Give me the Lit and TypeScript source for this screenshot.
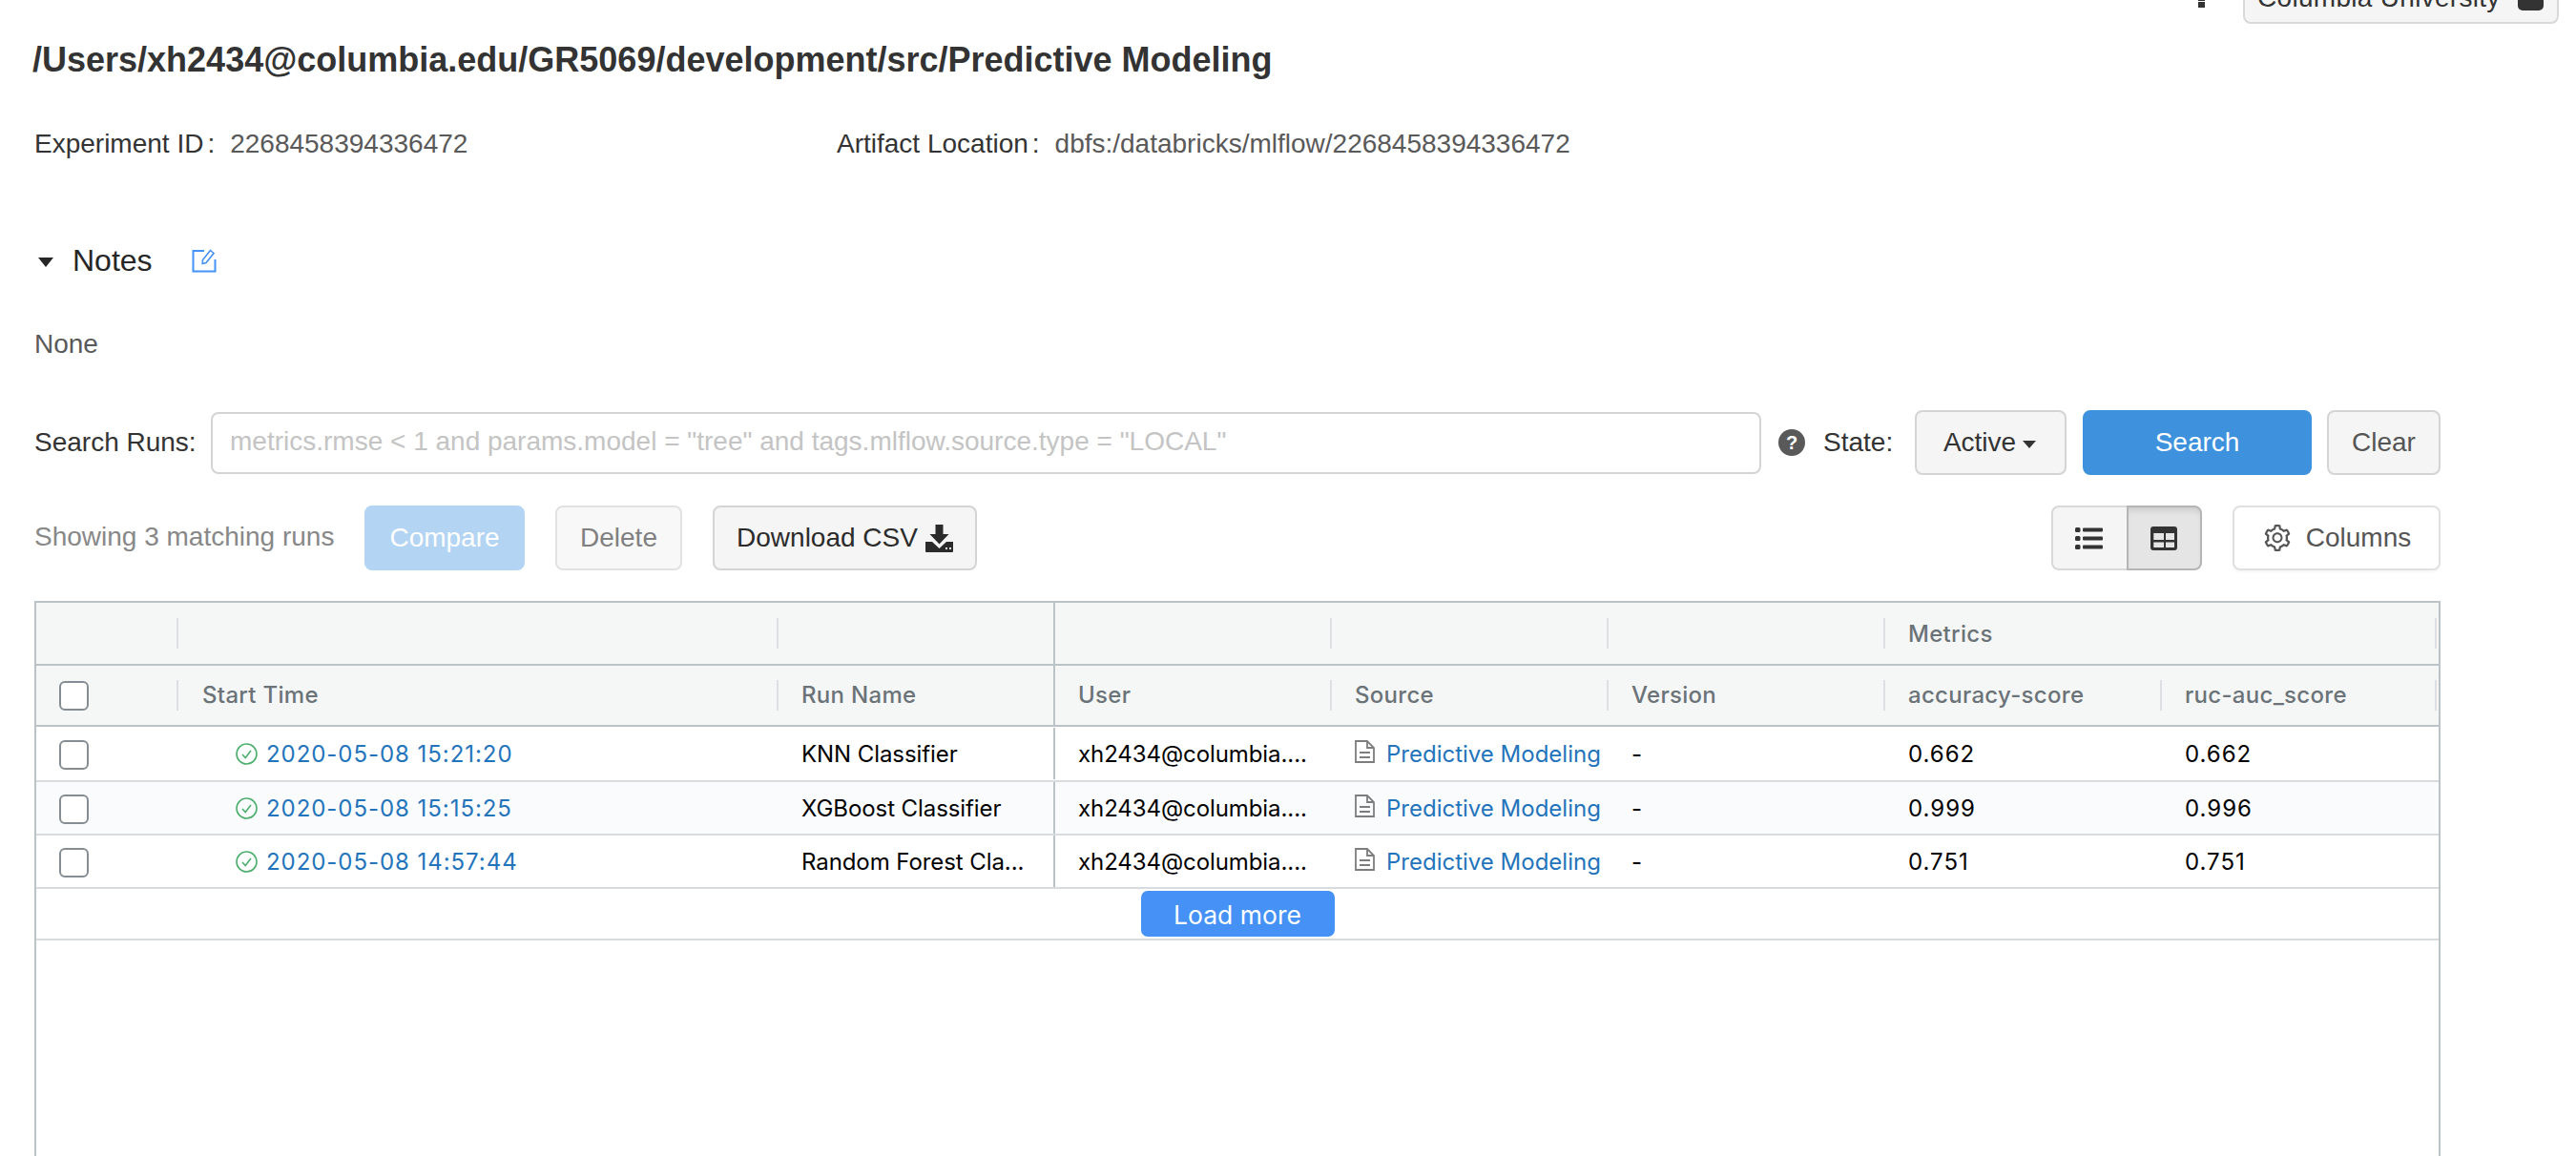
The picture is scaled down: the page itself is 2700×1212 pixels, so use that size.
import { LitElement, html, css, svg } from "lit";
import { customElement } from "lit/decorators.js";

const GEAR = "M924.8 625.7l-65.5-56c3.1-19 4.7-38.4 4.7-57.8s-1.6-38.8-4.7-57.8l65.5-56a32.03 32.03 0 0 0 9.3-35.2l-.9-2.6a443.74 443.74 0 0 0-79.7-137.9l-1.8-2.1a32.12 32.12 0 0 0-35.1-9.5l-81.3 28.9c-30-24.6-63.5-44-99.7-57.6l-15.7-85a32.05 32.05 0 0 0-25.8-25.7l-2.7-.5c-52.1-9.4-106.9-9.4-159 0l-2.7.5a32.05 32.05 0 0 0-25.8 25.7l-15.8 85.4a351.86 351.86 0 0 0-99 57.4l-81.9-29.1a32 32 0 0 0-35.1 9.5l-1.8 2.1a446.02 446.02 0 0 0-79.7 137.9l-.9 2.6c-4.5 12.5-.8 26.5 9.3 35.2l66.3 56.6c-3.1 18.8-4.6 38-4.6 57.1 0 19.2 1.5 38.4 4.6 57.1L99 625.5a32.03 32.03 0 0 0-9.3 35.2l.9 2.6c18.1 50.4 44.9 96.9 79.7 137.9l1.8 2.1a32.12 32.12 0 0 0 35.1 9.5l81.9-29.1c29.8 24.5 63.1 43.9 99 57.4l15.8 85.4a32.05 32.05 0 0 0 25.8 25.7l2.7.5a449.4 449.4 0 0 0 159 0l2.7-.5a32.05 32.05 0 0 0 25.8-25.7l15.7-85a350 350 0 0 0 99.7-57.6l81.3 28.9a32 32 0 0 0 35.1-9.5l1.8-2.1c34.8-41.1 61.6-87.5 79.7-137.9l.9-2.6c4.5-12.3.8-26.3-9.3-35zM788.3 465.9c2.5 15.1 3.8 30.6 3.8 46.1s-1.3 31-3.8 46.1l-6.6 40.1 74.7 63.9a370.03 370.03 0 0 1-42.6 73.6L721 702.8l-31.4 25.8c-23.9 19.6-50.5 35-79.3 45.8l-38.1 14.3-17.9 97a377.5 377.5 0 0 1-85 0l-17.9-97.2-37.8-14.5c-28.5-10.8-55-26.2-78.7-45.7l-31.4-25.9-93.4 33.2c-17-22.9-31.2-47.6-42.6-73.6l75.5-64.5-6.5-40c-2.4-14.9-3.7-30.3-3.7-45.5 0-15.3 1.2-30.6 3.7-45.5l6.5-40-75.5-64.5c11.3-26.1 25.6-50.7 42.6-73.6l93.4 33.2 31.4-25.9c23.7-19.5 50.2-34.9 78.7-45.7l37.9-14.3 17.9-97.2c28.1-3.2 56.8-3.2 85 0l17.9 97 38.1 14.3c28.7 10.8 55.4 26.2 79.3 45.8l31.4 25.8 92.8-32.9c17 22.9 31.2 47.6 42.6 73.6L781.8 426l6.5 39.9zM512 326c-97.2 0-176 78.8-176 176s78.8 176 176 176 176-78.8 176-176-78.8-176-176-176zm79.2 255.2A111.6 111.6 0 0 1 512 614c-29.9 0-58-11.7-79.2-32.8A111.6 111.6 0 0 1 400 502c0-29.9 11.7-58 32.8-79.2C454 401.6 482.1 390 512 390c29.9 0 58 11.6 79.2 32.8A111.6 111.6 0 0 1 624 502c0 29.9-11.7 58-32.8 79.2z";

const runs = [
  { time: "2020-05-08 15:21:20", name: "KNN Classifier", acc: "0.662", auc: "0.662" },
  { time: "2020-05-08 15:15:25", name: "XGBoost Classifier", acc: "0.999", auc: "0.996" },
  { time: "2020-05-08 14:57:44", name: "Random Forest Cla...", acc: "0.751", auc: "0.751" },
];

@customElement("app-root")
export class AppRoot extends LitElement {
  static styles = css`
    :host { display: block; height: 1212px; overflow: hidden; background: #fff; font-family: "Liberation Sans", Arial, sans-serif; font-size: 28px; color: #333; }
    .page { padding: 0 142px 0 36px; box-sizing: border-box; width: 2700px; }
    .topbar { display: flex; justify-content: flex-end; align-items: flex-end; height: 25px; margin-right: -124px; }
    .kebab { width: 7px; height: 8px; background: linear-gradient(#333 0 1px, #fff 1px 2px, #333 2px); margin-right: 40px; align-self: flex-start; }
    .org { height: 65px; flex: none; width: 331px; box-sizing: border-box; border: 2px solid #d9d9d9; border-radius: 8px; background: #f5f5f5; display: flex; align-items: flex-end; justify-content: space-between; padding: 0 14px 9px 13px; color: #333; line-height: 32px; margin-top: -40px; letter-spacing: .3px; }
    .org i { display: block; width: 27px; height: 22px; background: #333; border-radius: 5px; margin-bottom: 3px; }
    h1 { margin: 13px 0 0 -2px; font-size: 36px; line-height: 50px; font-weight: 700; color: #333; white-space: nowrap; }
    .meta { display: flex; margin-top: 43px; line-height: 40px; }
    .meta > div { display: flex; }
    .meta > div:first-child { width: 841px; }
    .meta b { font-weight: 400; margin-left: 4px; }
    .meta span { color: #595959; margin-left: 16px; }
    .notes { display: flex; align-items: center; margin-top: 82px; line-height: 40px; font-size: 32px; color: #262626; }
    .caret { width: 0; height: 0; border: 8.5px solid transparent; border-top: 10px solid #262626; border-bottom: 0; margin: 4px 20px 0 4px; }
    .edit { margin-left: 41px; display: block; }
    .none { margin-top: 48px; line-height: 40px; color: #595959; }
    .search { display: flex; align-items: center; height: 68px; margin-top: 49px; }
    .search label { width: 185px; flex: none; }
    .input { flex: 1; height: 65px; box-sizing: border-box; border: 2px solid #d4d4d4; border-radius: 8px; color: #c4c4c4; padding: 0 18px 2px; display: flex; align-items: center; white-space: nowrap; }
    .help { flex: none; width: 28px; height: 28px; border-radius: 50%; background: #595959; color: #fff; font-size: 20px; font-weight: 700; display: flex; align-items: center; justify-content: center; margin: 0 19px 0 18px; }
    .state { width: 96px; flex: none; }
    .btn { box-sizing: border-box; height: 68px; flex: none; border: 2px solid #d4d4d4; border-radius: 8px; background: #f5f5f5; color: #333; display: flex; align-items: center; justify-content: center; }
    .active { width: 159px; gap: 7px; padding-right: 2px; }
    .active i { display: block; border: 7.5px solid transparent; border-top: 8px solid #333; border-bottom: 0; margin-top: 3px; }
    .primary { width: 240px; margin-left: 17px; background: #3e91dc; border-color: #3e91dc; color: #fff; }
    .clear { width: 119px; margin-left: 16px; color: #555; }
    .toolbar { display: flex; align-items: center; height: 68px; margin-top: 32px; }
    .count { width: 346px; color: #888; flex: none; margin-top: -2px; }
    .compare { width: 168px; background: #b3d4f2; border-color: #b3d4f2; color: #fff; }
    .delete { width: 133px; margin-left: 32px; background: #f8f8f8; border-color: #e2e2e2; color: #808080; }
    .download { width: 277px; margin-left: 32px; gap: 8px; color: #2b2b2b; }
    .spacer { flex: 1; }
    .toggle { display: flex; width: 158px; height: 68px; box-sizing: border-box; }
    .toggle div { box-sizing: border-box; display: flex; align-items: center; justify-content: center; height: 68px; }
    .t1 { width: 79px; border: 2px solid #d9d9d9; border-right: 0; border-radius: 8px 0 0 8px; background: #f5f5f5; padding-right: 3px; }
    .t2 { width: 79px; border: 2px solid #b5b5b5; border-radius: 0 8px 8px 0; background: #e5e5e5; box-shadow: inset 0 6px 6px -3px rgba(0,0,0,.12); padding-right: 2px; }
    .columns { width: 218px; margin-left: 32px; background: #fff; border-color: #e0e0e0; color: #555; gap: 14px; box-shadow: 0 2px 3px rgba(0,0,0,.04); }
    .table { margin: 32px 0 0; height: 700px; box-sizing: border-box; border: 2px solid #bcc3c7; font-family: Inter, "Liberation Sans", sans-serif; font-size: 24px; color: #000; }
    .row { display: grid; grid-template-columns: 149px 629px 290px 290px 290px 290px 290px 288px; align-items: center; box-sizing: border-box; }
    .h1 { height: 66px; background: #f5f7f7; border-bottom: 2px solid #bcc3c7; }
    .h2 { height: 64px; background: #f5f7f7; border-bottom: 2px solid #bcc3c7; }
    .head { height: 32px; line-height: 32px; padding-left: 24px; box-sizing: border-box; border-right: 2px solid #dde0e2; color: #6b7378; font-weight: 500; font-size: 24px; letter-spacing: .3px; white-space: nowrap; }
    .h1 .head { padding-top: 1px; }
    .head.wide { grid-column: span 2; }
    .head.start { padding-left: 25px; }
    .head.lock, .cell.lock { border-right: 2px solid #bcc3c7; }
    .head.lock { height: 100%; margin: 0; display: flex; align-items: center; }
    .cell { padding-left: 24px; box-sizing: border-box; height: 54px; display: flex; align-items: center; white-space: nowrap; overflow: hidden; letter-spacing: -.08px; }
    .box { width: 31px; height: 31px; box-sizing: border-box; border: 2px solid #858d92; border-radius: 6px; background: #fff; flex: none; }
    .head.chk { padding-left: 24px; overflow: visible; display: flex; align-items: center; }
    .cell.chk { padding-left: 24px; }
    .cell.chk .box { margin-top: 3px; }
    .r { border-bottom: 2px solid #d9dcdf; height: 56px; }
    .r.first { height: 58px; }
    .r.alt { background: #fafbfd; }
    .cell.time { padding-left: 60px; gap: 9px; color: #2374bb; letter-spacing: .95px; }
    .cell.num { letter-spacing: 1px; }
    .cell.src { gap: 12px; color: #2374bb; letter-spacing: 0; }
    .src svg { margin-top: -5px; }
    .more { height: 54px; border-bottom: 2px solid #d9dcdf; display: flex; justify-content: center; box-sizing: border-box; padding: 2px 0 0; }
    .more div { width: 203px; height: 48px; padding-top: 1px; box-sizing: border-box; background: #4591f5; border-radius: 7px; color: #fff; display: flex; align-items: center; justify-content: center; font-size: 26.5px; }
    svg { display: block; flex: none; }
  `;

  render() {
    return html`<div class="page">
      <div class="topbar"><div class="kebab"></div><div class="org">Columbia University<i></i></div></div>
      <h1>/Users/xh2434@columbia.edu/GR5069/development/src/Predictive Modeling</h1>
      <div class="meta">
        <div>Experiment ID<b>:</b><span>2268458394336472</span></div>
        <div>Artifact Location<b>:</b><span>dbfs:/databricks/mlflow/2268458394336472</span></div>
      </div>
      <div class="notes"><i class="caret"></i>Notes
        <svg class="edit" width="26" height="25" viewBox="0 0 26 25" fill="none" stroke="#4591f5" stroke-width="2"><path d="M13 2H1.5v21.5h23V11"/><path d="M19.5 1.5l3.5 3-8 10-3.800 1 .3-4z" stroke-width="1.600"/></svg>
      </div>
      <div class="none">None</div>
      <div class="search">
        <label>Search Runs:</label>
        <div class="input">metrics.rmse &lt; 1 and params.model = "tree" and tags.mlflow.source.type = "LOCAL"</div>
        <div class="help">?</div>
        <div class="state">State:</div>
        <div class="btn active">Active<i></i></div>
        <div class="btn primary">Search</div>
        <div class="btn clear">Clear</div>
      </div>
      <div class="toolbar">
        <div class="count">Showing 3 matching runs</div>
        <div class="btn compare">Compare</div>
        <div class="btn delete">Delete</div>
        <div class="btn download">Download CSV
          <svg width="29" height="29" viewBox="0 0 29 29" fill="#2b2b2b"><path d="M10.5 0h8v10h6L14.5 20.5 4.500 10h6z"/><path d="M0 18h7l7.500 7 7.500-7h7v10a1 1 0 0 1-1 1H1a1 1 0 0 1-1-1z"/><path d="M21 24h2v2h-2zM25 24h2v2h-2z" fill="#f5f5f5"/></svg>
        </div>
        <div class="spacer"></div>
        <div class="toggle">
          <div class="t1"><svg width="29" height="23" viewBox="0 0 29 23" fill="#333"><rect x="0" y="0" width="5.500" height="5" rx="1.500"/><rect x="0" y="9" width="5.500" height="5" rx="1.500"/><rect x="0" y="18" width="5.500" height="5" rx="1.500"/><rect x="8" y=".5" width="21" height="4" rx="1"/><rect x="8" y="9.500" width="21" height="4" rx="1"/><rect x="8" y="18.500" width="21" height="4" rx="1"/></svg></div>
          <div class="t2"><svg width="28" height="25" viewBox="0 0 28 25"><rect width="28" height="25" rx="3" fill="#333"/><rect x="3.300" y="7" width="10.700" height="7" fill="#e5e5e5"/><rect x="16" y="7" width="9" height="7" fill="#e5e5e5"/><rect x="3.300" y="16.500" width="10.700" height="5.500" fill="#e5e5e5"/><rect x="16" y="16.500" width="9" height="5.500" fill="#e5e5e5"/></svg></div>
        </div>
        <div class="btn columns"><svg width="32" height="32" viewBox="0 0 1024 1024" fill="#555">${svg`<path d="${GEAR}"/>`}</svg>Columns</div>
      </div>
      <div class="table">
        <div class="row h1">
          <div class="head"></div><div class="head"></div><div class="head lock"></div>
          <div class="head"></div><div class="head"></div><div class="head"></div>
          <div class="head wide">Metrics</div>
        </div>
        <div class="row h2">
          <div class="head chk"><div class="box"></div></div>
          <div class="head start">Start Time</div>
          <div class="head lock">Run Name</div>
          <div class="head">User</div>
          <div class="head">Source</div>
          <div class="head">Version</div>
          <div class="head">accuracy-score</div>
          <div class="head">ruc-auc_score</div>
        </div>
        ${runs.map((r, i) => html`<div class="row r ${i === 0 ? "first" : ""} ${i === 1 ? "alt" : ""}">
          <div class="cell chk"><div class="box"></div></div>
          <div class="cell time">
            <svg width="23" height="23" viewBox="0 0 23 23" fill="none" stroke="#4caf6e" stroke-width="1.600"><circle cx="11.500" cy="11.500" r="10.500"/><path d="M7 12l3.200 3.500L16 8"/></svg>${r.time}
          </div>
          <div class="cell lock">${r.name}</div>
          <div class="cell">xh2434@columbia....</div>
          <div class="cell src">
            <svg width="21" height="24" viewBox="0 0 21 24" fill="none" stroke="#7d7d7d" stroke-width="1.800"><path d="M1 1h12l7 7v15H1z"/><path d="M13 1v7h7M5 13h11M5 18h11"/></svg>Predictive Modeling
          </div>
          <div class="cell">-</div>
          <div class="cell num">${r.acc}</div>
          <div class="cell num">${r.auc}</div>
        </div>`)}
        <div class="more"><div>Load more</div></div>
      </div>
    </div>`;
  }
}
